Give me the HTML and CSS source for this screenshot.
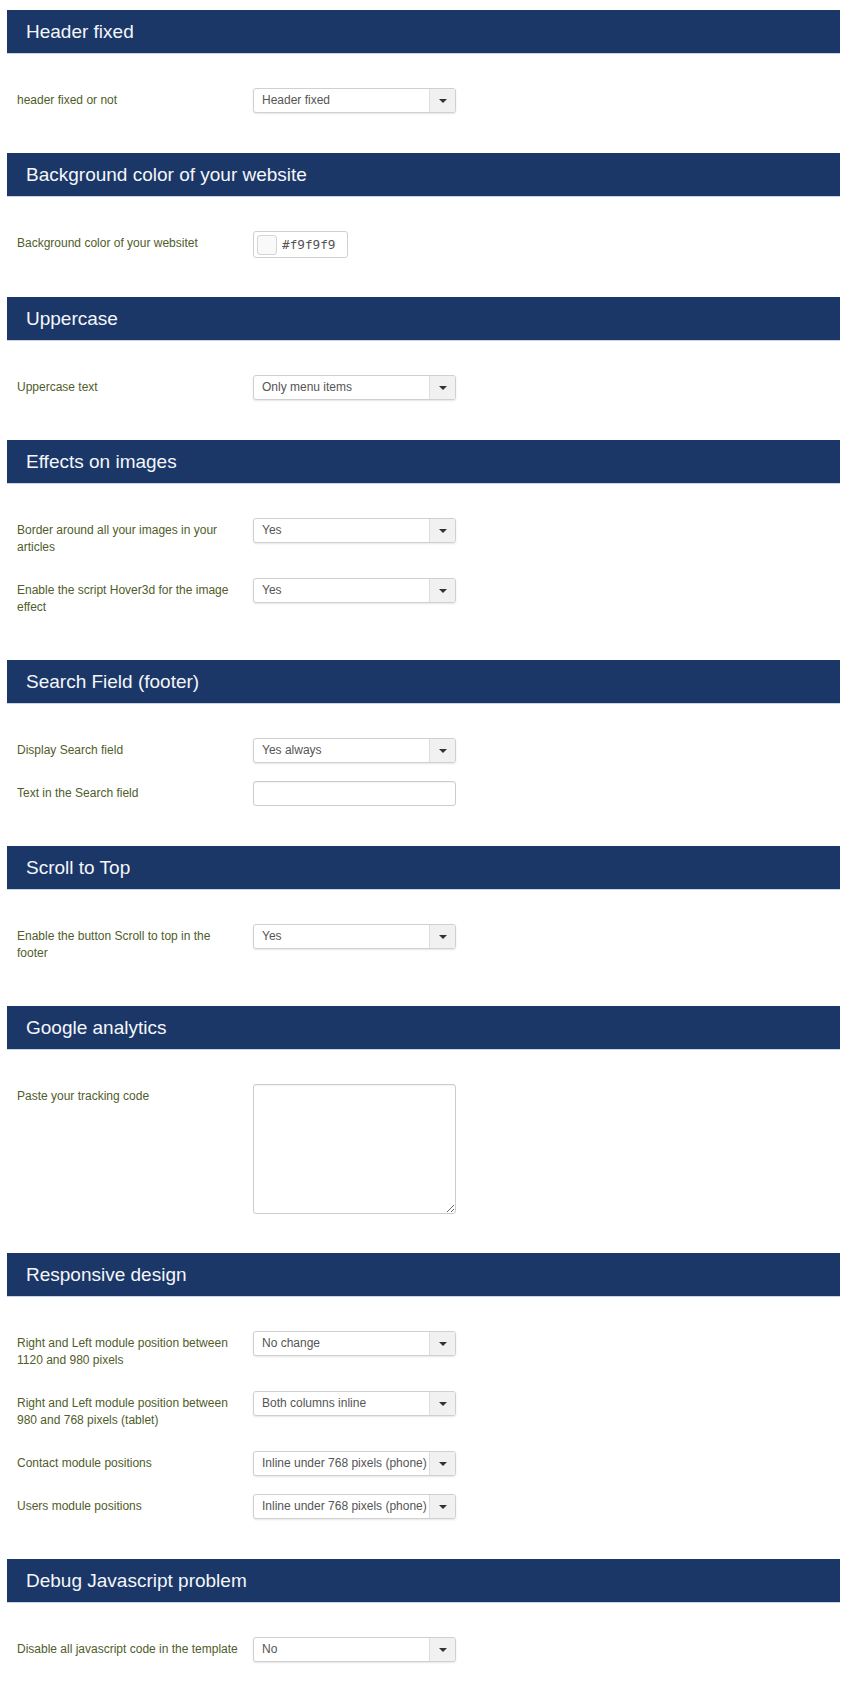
FILE: index.html
```html
<!DOCTYPE html>
<html lang="en">
<head>
    <meta charset="UTF-8">
    <meta name="viewport" content="width=device-width, initial-scale=1.0">
    <title>Template Options</title>
    <link rel="stylesheet" href="styles.css">
</head>
<body>
    <div class="options">

        <section class="panel">
            <h2 class="panel-title">Header fixed</h2>
            <div class="panel-body">
                <div class="field">
                    <label class="field-label">header fixed or not</label>
                    <div class="select"><span class="select-value">Header fixed</span><span class="select-btn"><b></b></span></div>
                </div>
            </div>
        </section>

        <section class="panel">
            <h2 class="panel-title">Background color of your website</h2>
            <div class="panel-body">
                <div class="field">
                    <label class="field-label">Background color of your websitet</label>
                    <div class="color-field">
                        <span class="swatch"></span>
                        <input class="color-input" type="text" value="#f9f9f9">
                    </div>
                </div>
            </div>
        </section>

        <section class="panel">
            <h2 class="panel-title">Uppercase</h2>
            <div class="panel-body">
                <div class="field">
                    <label class="field-label">Uppercase text</label>
                    <div class="select"><span class="select-value">Only menu items</span><span class="select-btn"><b></b></span></div>
                </div>
            </div>
        </section>

        <section class="panel">
            <h2 class="panel-title">Effects on images</h2>
            <div class="panel-body">
                <div class="field">
                    <label class="field-label">Border around all your images in your articles</label>
                    <div class="select"><span class="select-value">Yes</span><span class="select-btn"><b></b></span></div>
                </div>
                <div class="field">
                    <label class="field-label">Enable the script Hover3d for the image effect</label>
                    <div class="select"><span class="select-value">Yes</span><span class="select-btn"><b></b></span></div>
                </div>
            </div>
        </section>

        <section class="panel">
            <h2 class="panel-title">Search Field (footer)</h2>
            <div class="panel-body">
                <div class="field">
                    <label class="field-label">Display Search field</label>
                    <div class="select"><span class="select-value">Yes always</span><span class="select-btn"><b></b></span></div>
                </div>
                <div class="field">
                    <label class="field-label">Text in the Search field</label>
                    <input class="text-input" type="text" value="">
                </div>
            </div>
        </section>

        <section class="panel">
            <h2 class="panel-title">Scroll to Top</h2>
            <div class="panel-body">
                <div class="field">
                    <label class="field-label">Enable the button Scroll to top in the footer</label>
                    <div class="select"><span class="select-value">Yes</span><span class="select-btn"><b></b></span></div>
                </div>
            </div>
        </section>

        <section class="panel">
            <h2 class="panel-title">Google analytics</h2>
            <div class="panel-body">
                <div class="field">
                    <label class="field-label">Paste your tracking code</label>
                    <textarea class="textarea"></textarea>
                </div>
            </div>
        </section>

        <section class="panel">
            <h2 class="panel-title">Responsive design</h2>
            <div class="panel-body">
                <div class="field">
                    <label class="field-label">Right and Left module position between 1120 and 980 pixels</label>
                    <div class="select"><span class="select-value">No change</span><span class="select-btn"><b></b></span></div>
                </div>
                <div class="field">
                    <label class="field-label">Right and Left module position between 980 and 768 pixels (tablet)</label>
                    <div class="select"><span class="select-value">Both columns inline</span><span class="select-btn"><b></b></span></div>
                </div>
                <div class="field">
                    <label class="field-label">Contact module positions</label>
                    <div class="select"><span class="select-value">Inline under 768 pixels (phone)</span><span class="select-btn"><b></b></span></div>
                </div>
                <div class="field">
                    <label class="field-label">Users module positions</label>
                    <div class="select"><span class="select-value">Inline under 768 pixels (phone)</span><span class="select-btn"><b></b></span></div>
                </div>
            </div>
        </section>

        <section class="panel">
            <h2 class="panel-title">Debug Javascript problem</h2>
            <div class="panel-body">
                <div class="field">
                    <label class="field-label">Disable all javascript code in the template</label>
                    <div class="select"><span class="select-value">No</span><span class="select-btn"><b></b></span></div>
                </div>
            </div>
        </section>

    </div>
</body>
</html>
```

FILE: styles.css
```css
* {
    margin: 0;
    padding: 0;
    box-sizing: border-box;
    font-family: "Liberation Sans", Arial, sans-serif;
}

body {
    background-color: #fff;
    color: #555;
}

.options {
    padding: 10px 10px 0 7px;
}


/* section bars */
.panel-title {
    height: 43px;
    line-height: 43px;
    padding-left: 19px;
    background-color: #1b3768;
    color: #f4f6fa;
    font-size: 19px;
    font-weight: normal;
    box-shadow: 0 1px 0 #c9d5e6;
}

.panel-body {
    padding: 35px 0 22px 10px;
}


/* rows */
.field {
    display: flex;
    align-items: flex-start;
    margin-bottom: 17px;
}

.field-label {
    width: 224px;
    margin-right: 12px;
    padding: 4px 0 5px;
    font-size: 12px;
    line-height: 17px;
    color: #4f5d2a;
}


/* chosen-like select */
.select {
    display: flex;
    width: 203px;
    height: 25px;
    border: 1px solid #d0d0d0;
    border-radius: 3px;
    background-color: #fff;
    box-shadow: 0 1px 2px rgba(0, 0, 0, 0.1);
    overflow: hidden;
}

.select-value {
    flex: 1;
    padding-left: 8px;
    font-size: 12px;
    line-height: 23px;
    color: #555;
    white-space: nowrap;
}

.select-btn {
    display: flex;
    align-items: center;
    justify-content: center;
    width: 26px;
    background-color: #f1f1f1;
    border-left: 1px solid #ddd;
}

.select-btn b {
    width: 0;
    height: 0;
    border-left: 4px solid transparent;
    border-right: 4px solid transparent;
    border-top: 4px solid #333;
}


/* color picker */
.color-field {
    display: flex;
    align-items: center;
    width: 95px;
    height: 27px;
    padding: 0 3px;
    border: 1px solid #d0d0d0;
    border-radius: 3px;
    background-color: #fff;
}

.swatch {
    width: 20px;
    height: 20px;
    background-color: #f9f9f9;
    border: 1px solid #d4d4d4;
    border-radius: 3px;
}

.color-input {
    width: 62px;
    margin-left: 5px;
    border: none;
    outline: none;
    font-family: "DejaVu Sans Mono", "Liberation Mono", monospace;
    font-size: 12.7px;
    color: #555;
    background: transparent;
}


/* text inputs */
.text-input {
    width: 203px;
    height: 25px;
    padding: 0 8px;
    border: 1px solid #ccc;
    border-radius: 3px;
    box-shadow: inset 0 1px 1px rgba(0, 0, 0, 0.05);
    font-size: 12px;
    color: #555;
}

.textarea {
    width: 203px;
    height: 130px;
    padding: 4px 8px;
    border: 1px solid #ccc;
    border-radius: 3px;
    box-shadow: inset 0 1px 1px rgba(0, 0, 0, 0.05);
    font-size: 12px;
    color: #555;
}
```
